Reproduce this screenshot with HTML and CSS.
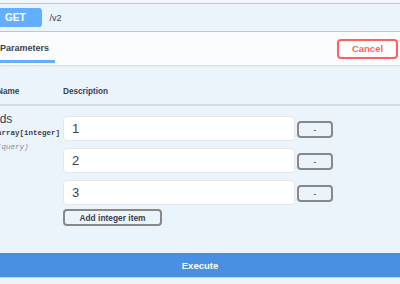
FILE: index.html
```html
<!DOCTYPE html>
<html lang="en">
<head>
    <meta charset="UTF-8">
    <meta name="viewport" content="width=device-width, initial-scale=1.0">
    <title>GET /v2</title>
    <link rel="stylesheet" href="styles.css">
</head>
<body>
    <div class="opblock">
        <!-- Ringkasan endpoint -->
        <div class="summary">
            <span class="method">GET</span>
            <span class="path">/v2</span>
        </div>

        <div class="section-header">
            <div class="tab">Parameters</div>
            <button class="btn btn-cancel">Cancel</button>
        </div>

        <div class="params">
            <div class="param-head">
                <div class="col-name">Name</div>
                <div class="col-desc">Description</div>
            </div>
            <div class="param-row">
                <div class="col-name">
                    <div class="param-name">ids</div>
                    <div class="param-type">array[integer]</div>
                    <div class="param-in">(query)</div>
                </div>
                <div class="col-desc">
                    <div class="item">
                        <input type="text" value="1">
                        <button class="btn btn-remove">-</button>
                    </div>
                    <div class="item">
                        <input type="text" value="2">
                        <button class="btn btn-remove">-</button>
                    </div>
                    <div class="item">
                        <input type="text" value="3">
                        <button class="btn btn-remove">-</button>
                    </div>
                    <button class="btn btn-add">Add integer item</button>
                </div>
            </div>
        </div>

        <div class="execute-wrap">
            <button class="btn btn-execute">Execute</button>
        </div>
    </div>
</body>
</html>
```

FILE: styles.css
```css
body, html {
    margin: 0;
    padding: 0;
    font-family: "Liberation Sans", Arial, sans-serif;
    color: #3b4151;
    background-color: #f3f6fa;
    overflow: hidden;
}
.opblock {
    margin-top: 3px;
    background-color: #ebf3fb;
    border-top: 1px solid #a8cdf3;
    height: 290px;
}
.summary {
    display: flex;
    align-items: center;
    height: 27px;
    border-bottom: 1px solid #a8cdf3;
}
.method {
    background-color: #61affe;
    color: #fff;
    font-weight: bold;
    font-size: 10px;
    line-height: 19px;
    padding: 0 16px 0 5px;
    border-radius: 0 3px 3px 0;
}
.path {
    margin-left: 8px;
    font-size: 9px;
}
.section-header {
    display: flex;
    justify-content: space-between;
    align-items: center;
    height: 33px;
    background-color: #fbfcfe;
    box-shadow: 0 1px 2px rgba(0, 0, 0, 0.1);
}
.tab {
    align-self: stretch;
    display: flex;
    align-items: center;
    padding: 3px 6px 0 0;
    margin-bottom: 2px;
    font-size: 9px;
    font-weight: bold;
    border-bottom: 3px solid #61affe;
    box-sizing: border-box;
}
.btn {
    font-family: "Liberation Sans", Arial, sans-serif;
    font-weight: bold;
    background: transparent;
    cursor: pointer;
    border-radius: 4px;
    color: #3b4151;
    padding: 0;
}
.btn-cancel {
    width: 61px;
    height: 20px;
    margin-right: 2px;
    border: 2px solid #ff6060;
    color: #ff6060;
    background-color: #fff;
    font-size: 9.5px;
}
.params {
    padding-top: 22px;
}
.param-head, .param-row {
    display: flex;
}
.param-head {
    font-size: 8.2px;
    line-height: 10px;
    font-weight: bold;
    padding-bottom: 7px;
    border-bottom: 2px solid #d5dbe4;
}
.col-name {
    width: 66px;
    margin-left: -3px;
}
.col-desc {
    flex: 1;
}
.param-row {
    padding-top: 10px;
}
.param-name {
    font-size: 12px;
    line-height: 14px;
    margin-top: -4px;
}
.param-type {
    font-family: "Liberation Mono", "DejaVu Sans Mono", monospace;
    font-size: 7.5px;
    font-weight: bold;
    line-height: 10px;
    margin-top: 2px;
}
.param-in {
    font-family: "Liberation Mono", "DejaVu Sans Mono", monospace;
    font-size: 7.5px;
    font-style: italic;
    color: #8a8f99;
    line-height: 10px;
    margin-top: 4px;
}
.item {
    display: flex;
    align-items: center;
    margin-bottom: 7px;
}
.item input {
    width: 232px;
    height: 25px;
    box-sizing: border-box;
    border: 1px solid #e3e7ec;
    border-radius: 4px;
    background-color: #fff;
    padding: 0 8px;
    font-family: "Liberation Sans", Arial, sans-serif;
    font-size: 13px;
    color: #3b4151;
}
.btn-remove {
    width: 36px;
    height: 17px;
    margin-left: 2px;
    margin-top: 2px;
    border: 2px solid #888;
    font-size: 7px;
    line-height: 10px;
}
.btn-add {
    display: block;
    width: 99px;
    height: 17px;
    margin-top: -3px;
    border: 2px solid #888;
    font-size: 8.4px;
}
.execute-wrap {
    margin-top: 27px;
}
.btn-execute {
    display: block;
    width: 100%;
    height: 25px;
    border: none;
    border-radius: 0;
    border-bottom: 1px solid #c3d9f2;
    background-color: #4990e2;
    color: #fff;
    font-size: 9.5px;
}
```
